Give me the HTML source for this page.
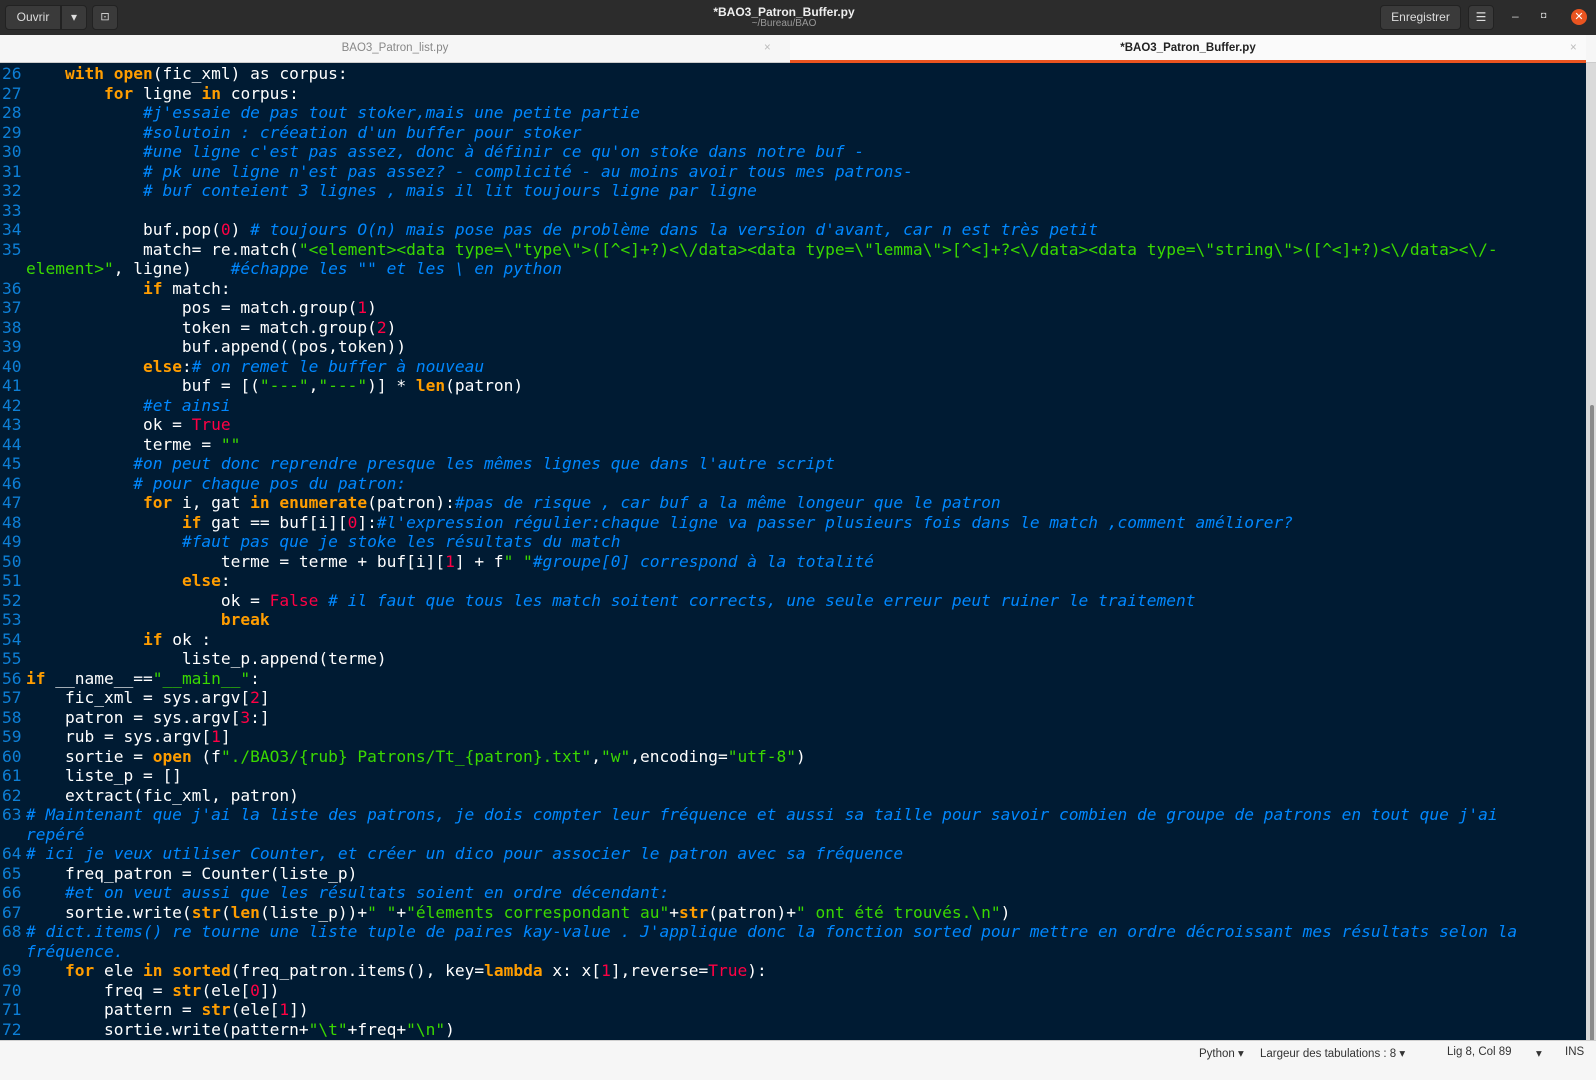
<!DOCTYPE html>
<html><head><meta charset="utf-8"><style>
*{margin:0;padding:0;box-sizing:border-box}
body{width:1596px;height:1080px;overflow:hidden;background:#001b33;font-family:"Liberation Sans","DejaVu Sans",sans-serif;position:relative}
#tb{position:absolute;left:0;top:0;width:1596px;height:35px;background:#2c2c2c}
.btn{position:absolute;top:5px;height:25px;background:#3a3a3a;border:1px solid #222;border-radius:4px;color:#ddd;font-size:12px;line-height:23px;text-align:center}
#tabs{position:absolute;left:0;top:35px;width:1596px;height:28px;background:#f6f6f6;border-bottom:1px solid #ccc}
.tab{position:absolute;top:0;height:28px;font-size:11.5px;line-height:27px;text-align:center;color:#888}
#ed{position:absolute;left:0;top:64px;width:1586px;height:976px;background:#001b33;font-family:"DejaVu Sans Mono","Liberation Mono",monospace;font-size:16.2px;color:#fff}
.r{position:absolute;left:0;height:19.5px;line-height:19.5px;white-space:pre;width:1586px}
.r i.ln{position:absolute;left:2px;font-style:normal;color:#0d7fd6}
.r span.t{position:absolute;left:26px}
.k{color:#ff9d00;font-weight:bold}
.c{color:#0088ff;font-style:italic}
.s{color:#3ad900}
.n{color:#ff0044}
#sb{position:absolute;left:1586px;top:63px;width:10px;height:977px;background:#dadada}
#th{position:absolute;left:1590px;top:405px;width:4px;height:650px;background:#8a8a8a;border-radius:2px}
#st{position:absolute;left:0;top:1040px;width:1596px;height:40px;background:#f6f6f6;border-top:1px solid #d0d0d0;font-size:11.5px;color:#333}
#st div{position:absolute;top:5px}
</style></head><body>
<div id="tb">
<div class="btn" style="left:5px;width:56px;border-radius:4px 0 0 4px">Ouvrir</div>
<div class="btn" style="left:61px;width:26px;border-radius:0 4px 4px 0">▾</div>
<div class="btn" style="left:92px;width:26px;font-size:11px">⊡</div>
<div style="position:absolute;left:0;width:1568px;top:5px;text-align:center;color:#eee;font-size:12px;font-weight:bold">*BAO3_Patron_Buffer.py</div>
<div style="position:absolute;left:0;width:1568px;top:18px;text-align:center;color:#999;font-size:10px">~/Bureau/BAO</div>
<div class="btn" style="left:1380px;width:81px;font-size:12px">Enregistrer</div>
<div class="btn" style="left:1468px;width:26px">☰</div>
<div style="position:absolute;left:1512px;top:9px;color:#ccc;font-size:12px">–</div>
<div style="position:absolute;left:1541px;top:10px;color:#ccc;font-size:9px">◘</div>
<div style="position:absolute;left:1571px;top:9px;width:16px;height:16px;border-radius:8px;background:#e95420;color:#fff;font-size:11px;line-height:16px;text-align:center">✕</div>
</div>
<div id="tabs">
<div class="tab" style="left:0;width:790px">BAO3_Patron_list.py<span style="position:absolute;left:764px;color:#bbb">×</span></div>
<div class="tab" style="left:790px;width:796px;color:#222;font-weight:bold;background:#fafafa;border-bottom:3px solid #e95420">*BAO3_Patron_Buffer.py<span style="position:absolute;left:780px;color:#bbb;font-weight:normal">×</span></div>
</div>
<div id="ed">
<div class="r" style="top:0"><i class="ln">26</i><span class="t">    <b class="k">with</b> <b class="k">open</b>(fic_xml) as corpus:</span></div>
<div class="r" style="top:19.5px"><i class="ln">27</i><span class="t">        <b class="k">for</b> ligne <b class="k">in</b> corpus:</span></div>
<div class="r" style="top:39px"><i class="ln">28</i><span class="t">            <em class="c">#j'essaie de pas tout stoker,mais une petite partie</em></span></div>
<div class="r" style="top:58.5px"><i class="ln">29</i><span class="t">            <em class="c">#solutoin : créeation d'un buffer pour stoker</em></span></div>
<div class="r" style="top:78px"><i class="ln">30</i><span class="t">            <em class="c">#une ligne c'est pas assez, donc à définir ce qu'on stoke dans notre buf -</em></span></div>
<div class="r" style="top:97.5px"><i class="ln">31</i><span class="t">            <em class="c"># pk une ligne n'est pas assez? - complicité - au moins avoir tous mes patrons-</em></span></div>
<div class="r" style="top:117px"><i class="ln">32</i><span class="t">            <em class="c"># buf conteient 3 lignes , mais il lit toujours ligne par ligne</em></span></div>
<div class="r" style="top:136.5px"><i class="ln">33</i><span class="t"></span></div>
<div class="r" style="top:156px"><i class="ln">34</i><span class="t">            buf.pop(<span class="n">0</span>) <em class="c"># toujours O(n) mais pose pas de problème dans la version d'avant, car n est très petit</em></span></div>
<div class="r" style="top:175.5px"><i class="ln">35</i><span class="t">            match= re.match(<span class="s">"&lt;element&gt;&lt;data type=\"type\"&gt;([^&lt;]+?)&lt;\/data&gt;&lt;data type=\"lemma\"&gt;[^&lt;]+?&lt;\/data&gt;&lt;data type=\"string\"&gt;([^&lt;]+?)&lt;\/data&gt;&lt;\/-</span></span></div>
<div class="r" style="top:195px"><span class="t"><span class="s">element&gt;"</span>, ligne)    <em class="c">#échappe les "" et les \ en python</em></span></div>
<div class="r" style="top:214.5px"><i class="ln">36</i><span class="t">            <b class="k">if</b> match:</span></div>
<div class="r" style="top:234px"><i class="ln">37</i><span class="t">                pos = match.group(<span class="n">1</span>)</span></div>
<div class="r" style="top:253.5px"><i class="ln">38</i><span class="t">                token = match.group(<span class="n">2</span>)</span></div>
<div class="r" style="top:273px"><i class="ln">39</i><span class="t">                buf.append((pos,token))</span></div>
<div class="r" style="top:292.5px"><i class="ln">40</i><span class="t">            <b class="k">else</b>:<em class="c"># on remet le buffer à nouveau</em></span></div>
<div class="r" style="top:312px"><i class="ln">41</i><span class="t">                buf = [(<span class="s">"---"</span>,<span class="s">"---"</span>)] * <b class="k">len</b>(patron)</span></div>
<div class="r" style="top:331.5px"><i class="ln">42</i><span class="t">            <em class="c">#et ainsi</em></span></div>
<div class="r" style="top:351px"><i class="ln">43</i><span class="t">            ok = <span class="n">True</span></span></div>
<div class="r" style="top:370.5px"><i class="ln">44</i><span class="t">            terme = <span class="s">""</span></span></div>
<div class="r" style="top:390px"><i class="ln">45</i><span class="t">           <em class="c">#on peut donc reprendre presque les mêmes lignes que dans l'autre script</em></span></div>
<div class="r" style="top:409.5px"><i class="ln">46</i><span class="t">           <em class="c"># pour chaque pos du patron:</em></span></div>
<div class="r" style="top:429px"><i class="ln">47</i><span class="t">            <b class="k">for</b> i, gat <b class="k">in</b> <b class="k">enumerate</b>(patron):<em class="c">#pas de risque , car buf a la même longeur que le patron</em></span></div>
<div class="r" style="top:448.5px"><i class="ln">48</i><span class="t">                <b class="k">if</b> gat == buf[i][<span class="n">0</span>]:<em class="c">#l'expression régulier:chaque ligne va passer plusieurs fois dans le match ,comment améliorer?</em></span></div>
<div class="r" style="top:468px"><i class="ln">49</i><span class="t">                <em class="c">#faut pas que je stoke les résultats du match</em></span></div>
<div class="r" style="top:487.5px"><i class="ln">50</i><span class="t">                    terme = terme + buf[i][<span class="n">1</span>] + f<span class="s">" "</span><em class="c">#groupe[0] correspond à la totalité</em></span></div>
<div class="r" style="top:507px"><i class="ln">51</i><span class="t">                <b class="k">else</b>:</span></div>
<div class="r" style="top:526.5px"><i class="ln">52</i><span class="t">                    ok = <span class="n">False</span> <em class="c"># il faut que tous les match soitent corrects, une seule erreur peut ruiner le traitement</em></span></div>
<div class="r" style="top:546px"><i class="ln">53</i><span class="t">                    <b class="k">break</b></span></div>
<div class="r" style="top:565.5px"><i class="ln">54</i><span class="t">            <b class="k">if</b> ok :</span></div>
<div class="r" style="top:585px"><i class="ln">55</i><span class="t">                liste_p.append(terme)</span></div>
<div class="r" style="top:604.5px"><i class="ln">56</i><span class="t"><b class="k">if</b> __name__==<span class="s">"__main__"</span>:</span></div>
<div class="r" style="top:624px"><i class="ln">57</i><span class="t">    fic_xml = sys.argv[<span class="n">2</span>]</span></div>
<div class="r" style="top:643.5px"><i class="ln">58</i><span class="t">    patron = sys.argv[<span class="n">3</span>:]</span></div>
<div class="r" style="top:663px"><i class="ln">59</i><span class="t">    rub = sys.argv[<span class="n">1</span>]</span></div>
<div class="r" style="top:682.5px"><i class="ln">60</i><span class="t">    sortie = <b class="k">open</b> (f<span class="s">"./BAO3/{rub} Patrons/Tt_{patron}.txt"</span>,<span class="s">"w"</span>,encoding=<span class="s">"utf-8"</span>)</span></div>
<div class="r" style="top:702px"><i class="ln">61</i><span class="t">    liste_p = []</span></div>
<div class="r" style="top:721.5px"><i class="ln">62</i><span class="t">    extract(fic_xml, patron)</span></div>
<div class="r" style="top:741px"><i class="ln">63</i><span class="t"><em class="c"># Maintenant que j'ai la liste des patrons, je dois compter leur fréquence et aussi sa taille pour savoir combien de groupe de patrons en tout que j'ai</em></span></div>
<div class="r" style="top:760.5px"><span class="t"><em class="c">repéré</em></span></div>
<div class="r" style="top:780px"><i class="ln">64</i><span class="t"><em class="c"># ici je veux utiliser Counter, et créer un dico pour associer le patron avec sa fréquence</em></span></div>
<div class="r" style="top:799.5px"><i class="ln">65</i><span class="t">    freq_patron = Counter(liste_p)</span></div>
<div class="r" style="top:819px"><i class="ln">66</i><span class="t">    <em class="c">#et on veut aussi que les résultats soient en ordre décendant:</em></span></div>
<div class="r" style="top:838.5px"><i class="ln">67</i><span class="t">    sortie.write(<b class="k">str</b>(<b class="k">len</b>(liste_p))+<span class="s">" "</span>+<span class="s">"élements correspondant au"</span>+<b class="k">str</b>(patron)+<span class="s">" ont été trouvés.\n"</span>)</span></div>
<div class="r" style="top:858px"><i class="ln">68</i><span class="t"><em class="c"># dict.items() re tourne une liste tuple de paires kay-value . J'applique donc la fonction sorted pour mettre en ordre décroissant mes résultats selon la</em></span></div>
<div class="r" style="top:877.5px"><span class="t"><em class="c">fréquence.</em></span></div>
<div class="r" style="top:897px"><i class="ln">69</i><span class="t">    <b class="k">for</b> ele <b class="k">in</b> <b class="k">sorted</b>(freq_patron.items(), key=<b class="k">lambda</b> x: x[<span class="n">1</span>],reverse=<span class="n">True</span>):</span></div>
<div class="r" style="top:916.5px"><i class="ln">70</i><span class="t">        freq = <b class="k">str</b>(ele[<span class="n">0</span>])</span></div>
<div class="r" style="top:936px"><i class="ln">71</i><span class="t">        pattern = <b class="k">str</b>(ele[<span class="n">1</span>])</span></div>
<div class="r" style="top:955.5px"><i class="ln">72</i><span class="t">        sortie.write(pattern+<span class="s">"\t"</span>+freq+<span class="s">"\n"</span>)</span></div>
</div>
<div id="sb"></div><div id="th"></div>
<div id="st">
<div style="left:1199px">Python ▾</div>
<div style="left:1260px">Largeur des tabulations : 8 ▾</div>
<div style="left:1447px">Lig 8, Col 89</div>
<div style="left:1536px">▾</div>
<div style="left:1565px">INS</div>
</div>
</body></html>
